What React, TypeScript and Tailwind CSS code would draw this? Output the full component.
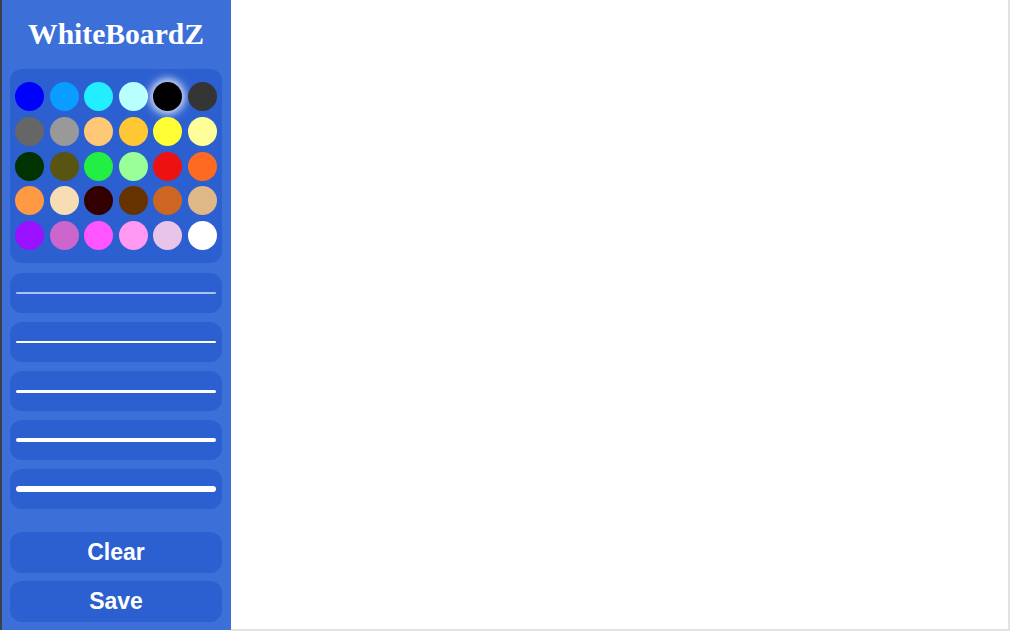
import { useState } from 'react';

const colors = [
  '#0000ff', '#0a9cff', '#22eeff', '#b8ffff', '#000000', '#353535',
  '#666666', '#999999', '#ffc877', '#ffc733', '#ffff33', '#ffff99',
  '#003300', '#5a5412', '#22ee44', '#99ff99', '#ee1111', '#ff6a22',
  '#ff9944', '#f7ddb3', '#330000', '#663300', '#cc6622', '#deb887',
  '#9911ff', '#cc66cc', '#ff55ff', '#ff99f2', '#e8c4e8', '#ffffff',
];

const widths = [1, 2, 3, 4, 5];

export default function App() {
  const [selected, setSelected] = useState('#000000');
  const [lineWidth, setLineWidth] = useState(1);

  return (
    <div className="flex w-[1020px] h-[638px] bg-white">
      {/* Sidebar */}
      <div className="w-[231px] h-[630px] shrink-0 bg-[#3d6fd9] border-l-2 border-[#3b3f4a] flex flex-col pl-[8px] pr-[9px] pb-[8px]">
        <div className="h-[69px] flex items-center justify-center">
          <h1 className="text-white font-bold text-[29.6px] leading-none" style={{ fontFamily: '"Liberation Serif", serif' }}>
            WhiteBoardZ
          </h1>
        </div>

        {/* Colour palette */}
        <div className="h-[194px] bg-[#2c5fd0] rounded-[12px] px-[5px] py-[13px] grid grid-cols-[repeat(6,29px)] justify-between content-between">
          {colors.map((c) => (
            <button
              key={c}
              onClick={() => setSelected(c)}
              className={
                'w-[29px] h-[29px] rounded-full ' +
                (selected === c ? 'shadow-[0_0_8px_3px_rgba(255,255,255,0.85)]' : '')
              }
              style={{ backgroundColor: c }}
            />
          ))}
        </div>

        {/* Stroke widths */}
        <div className="mt-[10px] flex flex-col gap-[9px]">
          {widths.map((w) => (
            <button
              key={w}
              onClick={() => setLineWidth(w)}
              className="h-[40px] bg-[#2c5fd0] rounded-[12px] flex items-center px-[6px]"
            >
              <div
                className={'w-full rounded-full ' + (w === 1 ? 'bg-[#a9c2f5]' : 'bg-white')}
                style={{ height: w === 1 ? 2 : w === 5 ? 6 : w }}
              />
            </button>
          ))}
        </div>

        <div className="mt-auto flex flex-col gap-[8px]">
          <button
            className="h-[41px] bg-[#2c5fd0] rounded-[12px] text-white font-bold text-[23px]"
            style={{ fontFamily: '"Liberation Sans", Arial, sans-serif' }}
          >
            Clear
          </button>
          <button
            className="h-[41px] bg-[#2c5fd0] rounded-[12px] text-white font-bold text-[23px]"
            style={{ fontFamily: '"Liberation Sans", Arial, sans-serif' }}
          >
            Save
          </button>
        </div>
      </div>

      {/* Canvas */}
      <div className="w-[779px] h-[631px] bg-white border-r-2 border-b-2 border-[#e2e2e2]" data-width={lineWidth} />
    </div>
  );
}
